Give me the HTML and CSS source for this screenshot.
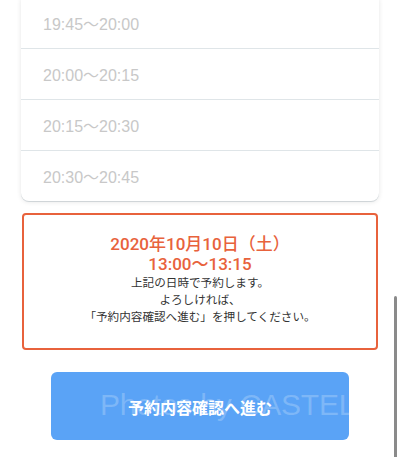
FILE: index.html
```html
<!DOCTYPE html>
<html lang="ja">
<head>
<meta charset="utf-8">
<title>予約</title>
<link rel="stylesheet" href="styles.css">
</head>
<body>
<div class="page">
  <ul class="slots">
    <li class="slot">19:45〜20:00</li>
    <li class="slot">20:00〜20:15</li>
    <li class="slot">20:15〜20:30</li>
    <li class="slot">20:30〜20:45</li>
  </ul>
  <div class="confirm">
    <p class="confirm-date">2020年10月10日（土）<br>13:00〜13:15</p>
    <p class="confirm-note">上記の日時で予約します。<br>よろしければ、<br>「予約内容確認へ進む」を押してください。</p>
  </div>
  <div class="actions">
    <button class="next-btn" type="button"><span class="next-label">予約内容確認へ進む</span><span class="watermark">Photos by CASTEL</span></button>
  </div>
</div>
<div class="scroll-indicator"></div>
</body>
</html>
```

FILE: styles.css
```css
html, body {
  margin: 0;
  padding: 0;
  background: #ffffff;
}
body {
  width: 400px;
  height: 457px;
  overflow: hidden;
  font-family: "Noto Sans CJK JP", "Noto Sans", sans-serif;
}
.page {
  display: flex;
  flex-direction: column;
}
.slots {
  list-style: none;
  margin: -2px 21px 0;
  padding: 0;
  background: #fff;
  border-radius: 0 0 8px 8px;
  box-shadow: 0 1px 5px rgba(0, 0, 0, 0.10), 0 1px 0 #dde3e6;
}
.slot {
  height: 50px;
  display: flex;
  align-items: center;
  padding-left: 22px;
  font-family: "Liberation Sans", "Noto Sans CJK JP", sans-serif;
  font-size: 16px;
  font-weight: 400;
  color: #c8c8c8;
  border-bottom: 1px solid #dfe5e8;
}
.slot:last-child {
  border-bottom: none;
}
.confirm {
  margin: 12px 22px 0;
  border: 2.5px solid #e8623c;
  border-radius: 4px;
  padding: 20px 8px 23px;
  text-align: center;
}
.confirm p {
  margin: 0;
}
.confirm-date {
  color: #e8623c;
  font-family: Roboto, "Noto Sans CJK JP", sans-serif;
  font-size: 17px;
  line-height: 19.5px;
  font-weight: 500;
}
.confirm-note {
  color: #333333;
  font-size: 11.6px;
  line-height: 17px;
}
.actions {
  display: flex;
  justify-content: center;
  margin-top: 22px;
}
.next-btn {
  position: relative;
  overflow: hidden;
  width: 298px;
  height: 68px;
  border: none;
  border-radius: 6px;
  background: #5aa3f6;
  color: #fff;
  font-family: "Noto Sans CJK JP", "Noto Sans", sans-serif;
  font-size: 16px;
  font-weight: 700;
  padding: 0;
  display: flex;
  align-items: center;
  justify-content: center;
}
.next-label {
  position: relative;
  top: 1px;
}
.watermark {
  position: absolute;
  left: 49px;
  top: 16px;
  font-family: "Liberation Sans", sans-serif;
  font-weight: 400;
  font-size: 30px;
  color: rgba(255, 255, 255, 0.22);
  white-space: nowrap;
  letter-spacing: -0.2px;
}
.scroll-indicator {
  position: fixed;
  left: 394px;
  top: 296px;
  width: 3px;
  height: 170px;
  border-radius: 2px;
  background: #8a8a8a;
}
```
